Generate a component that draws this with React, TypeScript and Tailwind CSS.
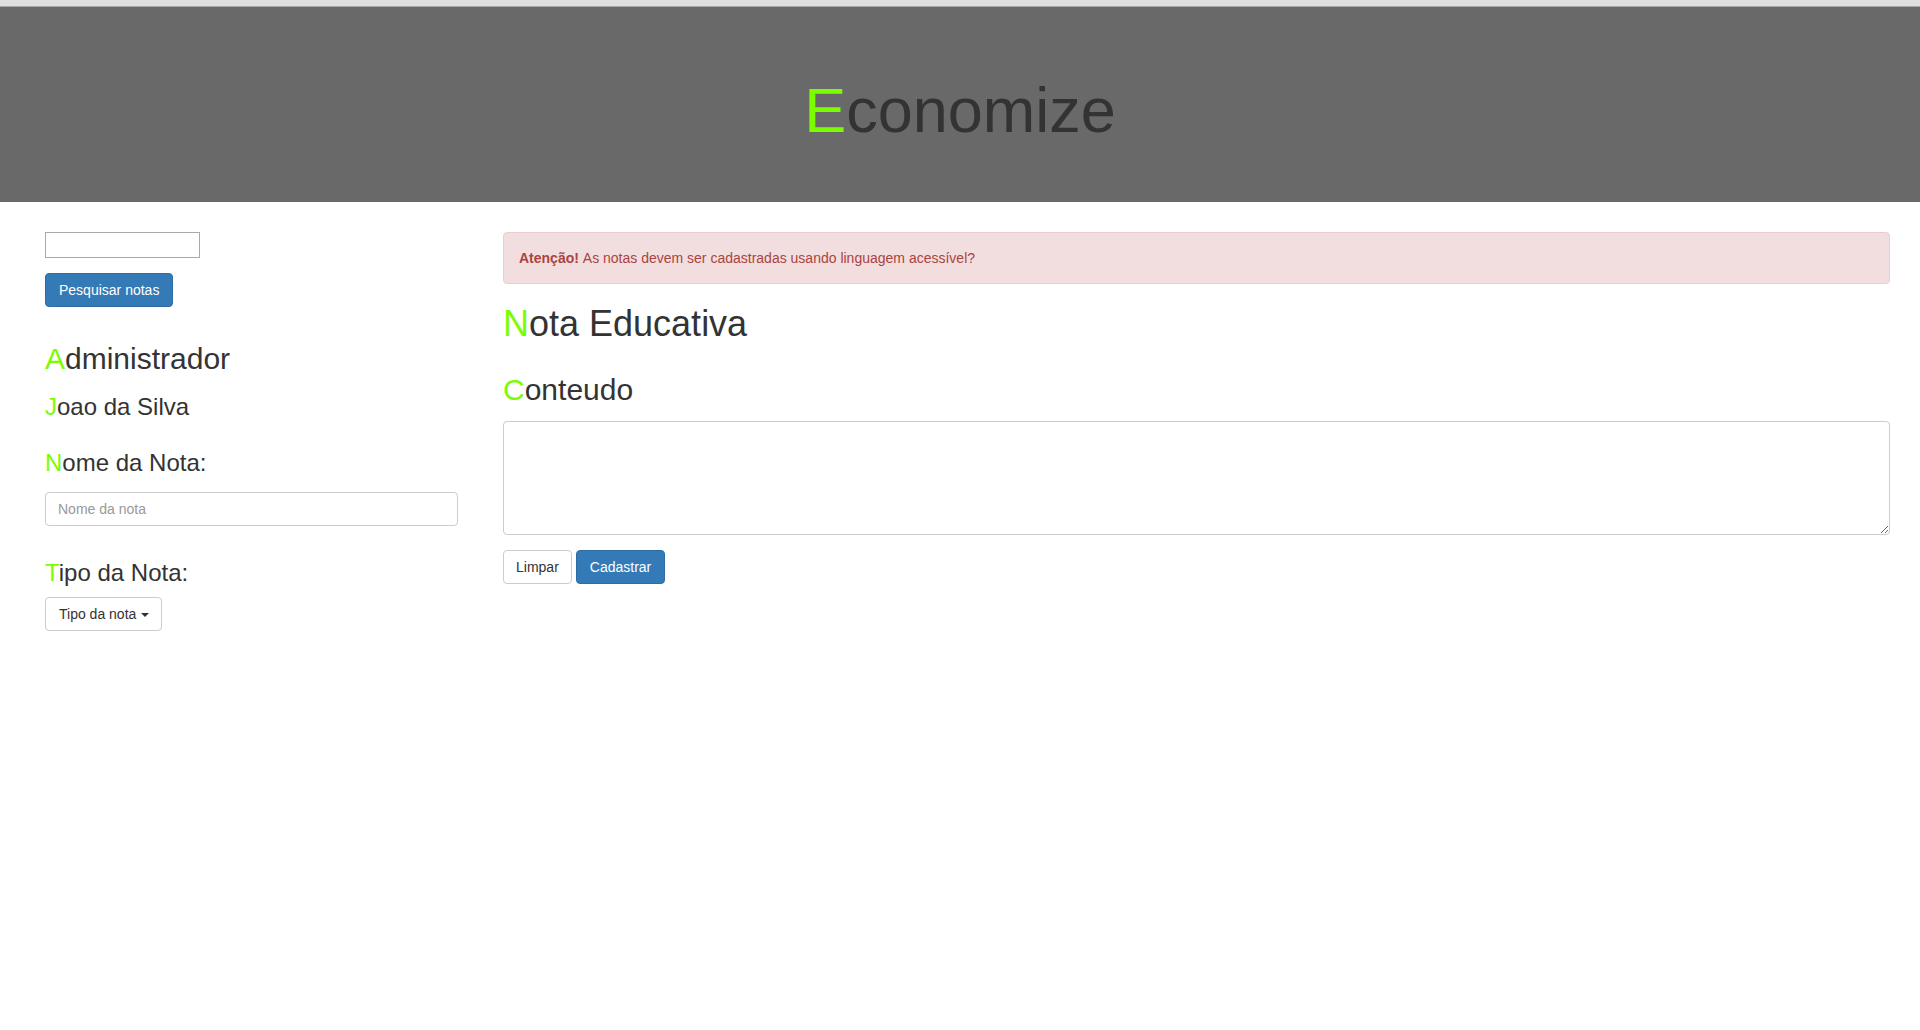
import React from "react";

const G = "text-[#7cfc00]";

export default function App() {
  return (
    <div className="min-h-[1030px] bg-white text-[#333] font-['Liberation_Sans',Arial,sans-serif]">
      <div className="h-[6px] bg-[#dfdfdf]" />
      <div className="h-px bg-[#a8a8a8]" />
      <header className="h-[195px] bg-[#696969] pt-[72px] text-center">
        <h1 className="text-[63px] leading-[62px] font-normal text-[#333]">
          <span className={G}>E</span>conomize
        </h1>
      </header>

      <div className="flex pl-[45px] pr-[30px] pt-[30px] gap-[45px]">
        <aside className="w-[413px] shrink-0 flex flex-col items-start">
          <input
            type="text"
            className="w-[155px] h-[26px] border border-[#a9a9a9] bg-white outline-none"
          />
          <button className="mt-[15px] h-[34px] px-[13px] rounded-[4px] bg-[#337ab7] border border-[#2e6da4] text-white text-[14px] leading-[20px]">
            Pesquisar notas
          </button>
          <h2 className="mt-[35px] text-[30px] leading-[33px] font-normal">
            <span className={G}>A</span>dministrador
          </h2>
          <h3 className="mt-[19px] text-[24px] leading-[26px] font-normal">
            <span className={G}>J</span>oao da Silva
          </h3>
          <h3 className="mt-[30px] text-[24px] leading-[26px] font-normal">
            <span className={G}>N</span>ome da Nota:
          </h3>
          <input
            type="text"
            placeholder="Nome da nota"
            className="mt-[16px] w-[413px] h-[34px] px-[12px] border border-[#ccc] rounded-[4px] text-[14px] text-[#555] placeholder:text-[#999] outline-none"
          />
          <h3 className="mt-[34px] text-[24px] leading-[26px] font-normal">
            <span className={G}>T</span>ipo da Nota:
          </h3>
          <button className="mt-[11px] h-[34px] pl-[13px] pr-[12px] rounded-[4px] bg-white border border-[#ccc] text-[#333] text-[14px] leading-[20px] flex items-center">
            Tipo da nota
            <span className="ml-[5px] mt-[2px] inline-block w-0 h-0 border-l-[4px] border-r-[4px] border-t-[4px] border-l-transparent border-r-transparent border-t-[#333]" />
          </button>
        </aside>

        <main className="flex-1 flex flex-col items-start">
          <div className="w-full h-[52px] px-[15px] flex items-center rounded-[4px] border border-[#ebccd1] bg-[#f2dede] text-[#a94442] text-[14px]">
            <strong className="font-bold">Atenção!</strong>&nbsp;As notas devem ser cadastradas usando linguagem acessível?
          </div>
          <h1 className="mt-[20px] text-[36px] leading-[40px] font-normal">
            <span className={G}>N</span>ota Educativa
          </h1>
          <h2 className="mt-[29px] text-[30px] leading-[33px] font-normal">
            <span className={G}>C</span>onteudo
          </h2>
          <textarea className="mt-[15px] w-full h-[114px] border border-[#ccc] rounded-[4px] outline-none resize-y px-[12px] py-[6px] text-[14px]" />
          <div className="mt-[15px] flex gap-[4px]">
            <button className="h-[34px] px-[12px] rounded-[4px] bg-white border border-[#ccc] text-[#333] text-[14px] leading-[20px]">
              Limpar
            </button>
            <button className="h-[34px] px-[13px] rounded-[4px] bg-[#337ab7] border border-[#2e6da4] text-white text-[14px] leading-[20px]">
              Cadastrar
            </button>
          </div>
        </main>
      </div>
    </div>
  );
}
